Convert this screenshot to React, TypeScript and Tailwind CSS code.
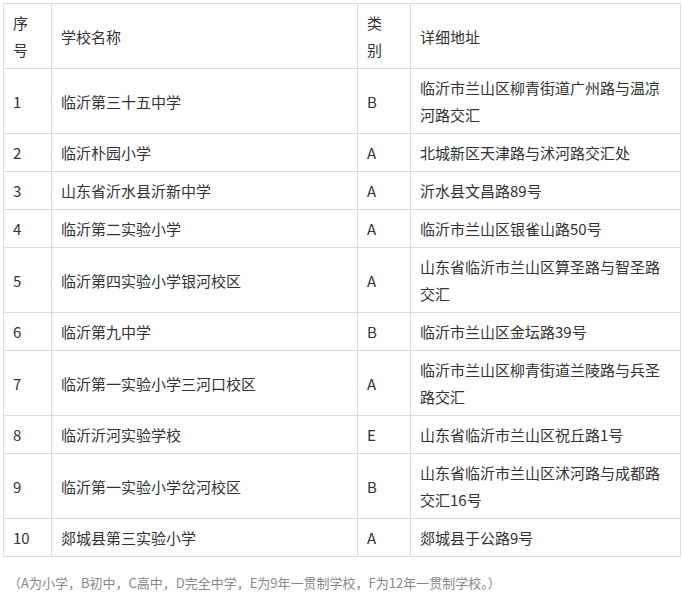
export default function App() {
  const rows: [string, string, string, string][] = [
    ["1", "临沂第三十五中学", "B", "临沂市兰山区柳青街道广州路与温凉河路交汇"],
    ["2", "临沂朴园小学", "A", "北城新区天津路与沭河路交汇处"],
    ["3", "山东省沂水县沂新中学", "A", "沂水县文昌路89号"],
    ["4", "临沂第二实验小学", "A", "临沂市兰山区银雀山路50号"],
    ["5", "临沂第四实验小学银河校区", "A", "山东省临沂市兰山区算圣路与智圣路交汇"],
    ["6", "临沂第九中学", "B", "临沂市兰山区金坛路39号"],
    ["7", "临沂第一实验小学三河口校区", "A", "临沂市兰山区柳青街道兰陵路与兵圣路交汇"],
    ["8", "临沂沂河实验学校", "E", "山东省临沂市兰山区祝丘路1号"],
    ["9", "临沂第一实验小学岔河校区", "B", "山东省临沂市兰山区沭河路与成都路交汇16号"],
    ["10", "郯城县第三实验小学", "A", "郯城县于公路9号"],
  ];
  const td = "border border-[#dcdcdc] px-[9px] py-[5px] align-middle";
  return (
    <div className="w-[683px] h-[598px] bg-white pt-[3px] pl-[3px] text-[15px] leading-[27px] text-[#333]" style={{ fontFamily: '"Noto Sans CJK SC", "Noto Sans", sans-serif' }}>
      <table className="border-collapse table-fixed w-[677px]">
        <colgroup>
          <col className="w-[48px]" />
          <col className="w-[306px]" />
          <col className="w-[53px]" />
          <col className="w-[270px]" />
        </colgroup>
        <tbody>
          <tr>
            <td className={td}>序<br />号</td>
            <td className={td}>学校名称</td>
            <td className={td}>类<br />别</td>
            <td className={td}>详细地址</td>
          </tr>
          {rows.map((r) => (
            <tr key={r[0]}>
              {r.map((c, i) => (
                <td key={i} className={td}>{c}</td>
              ))}
            </tr>
          ))}
        </tbody>
      </table>
      <div className="mt-[12px] pl-[5px] text-[13px] text-[#888]">（A为小学，B初中，C高中，D完全中学，E为9年一贯制学校，F为12年一贯制学校。）</div>
    </div>
  );
}
